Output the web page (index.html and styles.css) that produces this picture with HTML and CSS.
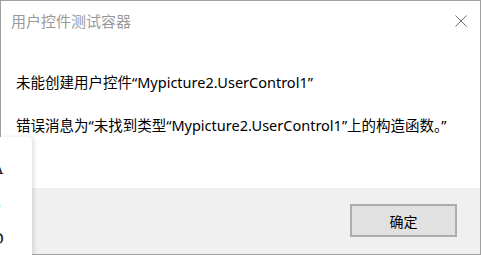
FILE: index.html
```html
<!DOCTYPE html>
<html lang="zh-CN">
<head>
  <meta charset="UTF-8" />
  <title>用户控件测试容器</title>
  <link rel="stylesheet" href="styles.css">
</head>
<body>
  <div class="dialog">
    <div class="titlebar">
      <span class="title">用户控件测试容器</span>
      <button class="close" aria-label="关闭">
        <svg width="12" height="12" viewBox="0 0 12 12">
          <path d="M0.5 0.5 L11.5 11.5 M11.5 0.5 L0.5 11.5" stroke="#707070" stroke-width="1" fill="none" />
        </svg>
      </button>
    </div>
    <div class="content">
      <p class="msg">未能创建用户控件“Mypicture2.UserControl1”</p>
      <p class="msg">错误消息为“未找到类型“Mypicture2.UserControl1”上的构造函数。”</p>
    </div>
    <div class="footer">
      <button class="ok">确定</button>
    </div>
  </div>

  <!-- window behind, peeking in at the left -->
  <ul class="side-list">
    <li>A</li>
    <li>S</li>
    <li>D</li>
  </ul>
</body>
</html>
```

FILE: styles.css
```css
html, body {
  margin: 0;
  padding: 0;
  background: #fff;
}
body {
  width: 481px;
  height: 255px;
  position: relative;
  overflow: hidden;
  font-family: "Noto Sans", "Noto Sans CJK SC", sans-serif;
}
.dialog {
  box-sizing: border-box;
  width: 481px;
  height: 255px;
  border: 1px solid #a0a0a0;
  display: flex;
  flex-direction: column;
  background: #fff;
}
.titlebar {
  height: 39px;
  display: flex;
  align-items: center;
  justify-content: space-between;
  padding: 0 13px 0 10px;
}
.title {
  font-size: 15px;
  color: #999;
  font-family: "Noto Sans CJK SC", sans-serif;
}
.close {
  border: none;
  background: none;
  padding: 0;
  width: 12px;
  height: 12px;
  display: flex;
}
.content {
  flex: 1;
  padding: 32px 15px 0;
}
.msg {
  margin: 0 0 23px;
  font-size: 14.5px;
  line-height: 20px;
  color: #000;
}
.footer {
  height: 66px;
  background: #f0f0f0;
  display: flex;
  justify-content: flex-end;
  align-items: flex-start;
  padding: 16px 23px 0 0;
  box-sizing: border-box;
}
.ok {
  width: 107px;
  height: 33px;
  background: #e1e1e1;
  border: 2px solid #adadad;
  font-family: "Noto Sans CJK SC", sans-serif;
  font-size: 14px;
  color: #000;
  padding: 0;
}
.side-list {
  position: absolute;
  left: 0;
  top: 137px;
  bottom: 0;
  width: 32px;
  margin: 0;
  padding: 14px 0 0;
  list-style: none;
  background: #fff;
  border-top-right-radius: 4px;
  box-shadow: 2px 0 4px rgba(0, 0, 0, 0.12);
}
.side-list li {
  font-family: "Liberation Serif", serif;
  font-size: 16px;
  line-height: 35px;
  margin-left: -8px;
  color: #111;
}
```
